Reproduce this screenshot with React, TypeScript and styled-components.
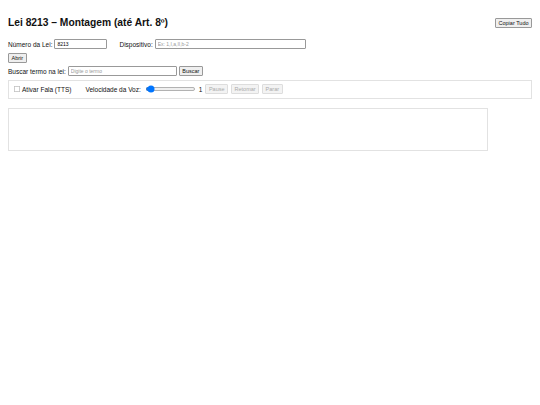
import React from 'react';
import styled, {createGlobalStyle} from 'styled-components';

const GlobalStyle = createGlobalStyle`
  html, body {
    margin: 0;
    background: #fff;
  }
  body {
    font-family: "Liberation Sans", Arial, sans-serif;
    color: #111;
  }
`;

// the page is drawn at half scale
const Page = styled.div`
  zoom: 0.5;
  padding: 16px;
  font-size: 13px;
`;

const Header = styled.header`
  display: flex;
  justify-content: space-between;
  align-items: center;
  margin: 18px 0 22px;
`;

const Title = styled.h2`
  margin: 0;
  font-size: 20.5px;
  font-weight: bold;
`;

const Button = styled.button`
  font-family: "Liberation Sans", Arial, sans-serif;
  font-size: 11px;
  padding: 2px 5px;
  border: 1px solid #999;
  border-radius: 2px;
  background: #efefef;
  color: #111;
  &:disabled {
    color: #aaa;
    border-color: #ddd;
    background: #f3f3f3;
  }
`;

const Row = styled.div`
  display: flex;
  align-items: center;
  gap: 4px;
  margin-bottom: 7px;
`;

const Label = styled.label`
  display: flex;
  align-items: center;
  gap: 4px;
  margin-right: 20px;
`;

const Input = styled.input<{w: number}>`
  width: ${p => p.w}px;
  box-sizing: border-box;
  font-family: "Liberation Sans", Arial, sans-serif;
  font-size: 10px;
  padding: 2px 4px;
  border: 1px solid #999;
  border-radius: 2px;
  &::placeholder {
    color: #999;
  }
`;

const TtsPanel = styled.div`
  display: flex;
  align-items: center;
  gap: 6px;
  border: 1px solid #e2e2e2;
  padding: 7px 10px;
  margin-top: 2px;
`;

const CheckLabel = styled.label`
  display: flex;
  align-items: center;
  gap: 5px;
  margin-right: 22px;
  input {
    margin: 0;
    width: 11px;
    height: 11px;
  }
`;

const Slider = styled.input`
  width: 102px;
  margin: 0 0 0 2px;
`;

const Output = styled.div`
  width: 960px;
  height: 86px;
  box-sizing: border-box;
  border: 1px solid #e2e2e2;
  margin-top: 18px;
`;

export default function App() {
  return (
    <Page>
      <GlobalStyle/>
      <Header>
        <Title>Lei 8213 – Montagem (até Art. 8º)</Title>
        <Button>Copiar Tudo</Button>
      </Header>
      <Row>
        <Label>Número da Lei: <Input w={106} defaultValue="8213"/></Label>
        <Label>Dispositivo: <Input w={302} placeholder="Ex: 1,I,a,II,b-2"/></Label>
      </Row>
      <Row>
        <Button>Abrir</Button>
      </Row>
      <Row>
        Buscar termo na lei: <Input w={218} placeholder="Digite o termo"/>
        <Button>Buscar</Button>
      </Row>
      <TtsPanel>
        <CheckLabel><input type="checkbox"/> Ativar Fala (TTS)</CheckLabel>
        Velocidade da Voz:
        <Slider type="range" min={0.5} max={10} step={0.1} defaultValue={1}/>
        <span>1</span>
        <Button disabled>Pause</Button>
        <Button disabled>Retomar</Button>
        <Button disabled>Parar</Button>
      </TtsPanel>
      <Output/>
    </Page>
  );
}
